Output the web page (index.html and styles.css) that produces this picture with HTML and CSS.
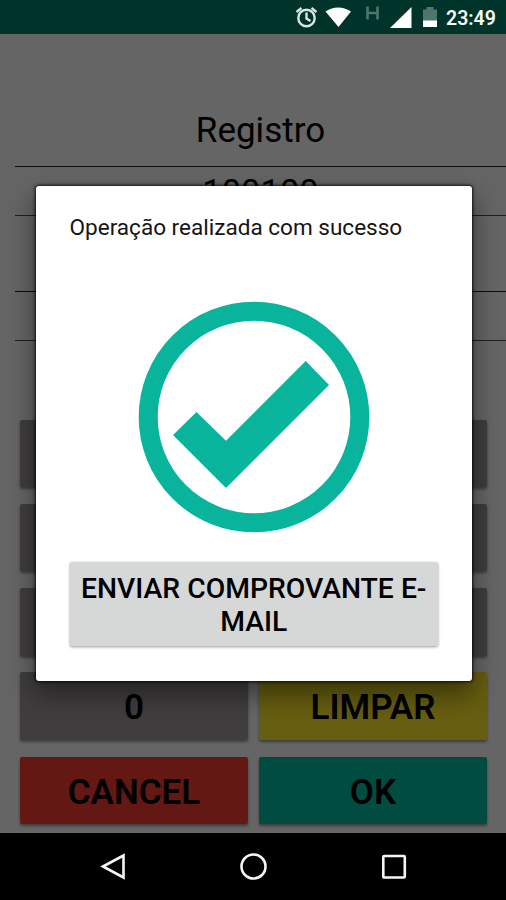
FILE: index.html
```html
<!DOCTYPE html>
<html lang="pt-BR">
<head>
<meta charset="utf-8">
<title>Registro</title>
<link rel="stylesheet" href="styles.css">
</head>
<body>
<div class="phone">
  <header class="status">
    <svg class="status-icons" width="145" height="34" viewBox="0 0 145 34">
      <g fill="none" stroke="#d9e6e2" stroke-width="2.400">
        <circle cx="12.500" cy="18" r="8.200"/>
        <path d="M12.500 12.500v6l4 2.500M2.500 12l5-4M22.500 12l-5-4"/>
      </g>
      <path d="M31.500 11.500Q44 3.500 57 11.500L44.500 27Z" fill="#fff"/>
      <path d="M73.500 6.500v13M83.500 6.500v13M73.500 13h10" fill="none" stroke="#4d766d" stroke-width="2.600"/>
      <path d="M96 28L117.500 7v21Z" fill="#fff"/>
      <path d="M129 21V9.500h3.500V7h7v2.500h3.500V21Z" fill="#4d766d"/>
      <path d="M129 20.500h14V27h-14Z" fill="#fff"/>
    </svg>
    <span class="clock">23:49</span>
  </header>
  <main class="screen">
    <h1 class="label">Registro</h1>
    <div class="field">100100</div>
    <div class="spacer"></div>
    <div class="field"></div>
    <div class="keypad">
      <button class="key"></button><button class="key"></button>
      <button class="key"></button><button class="key"></button>
      <button class="key"></button><button class="key"></button>
      <button class="key">0</button><button class="key clear">LIMPAR</button>
      <button class="key cancel">CANCEL</button><button class="key ok">OK</button>
    </div>
  </main>
  <nav class="nav">
    <svg width="28" height="28" viewBox="0 0 28 28"><path d="M4 14.500L24.500 3.500v22Z"/></svg>
    <svg width="28" height="28" viewBox="0 0 28 28"><circle cx="13.500" cy="14.500" r="12"/></svg>
    <svg width="28" height="28" viewBox="0 0 28 28"><rect x="3.300" y="4" width="21.500" height="21.500" rx="1"/></svg>
  </nav>
  <section class="dialog" role="dialog">
    <p class="message">Operação realizada com sucesso</p>
    <svg class="check" width="232" height="232" viewBox="0 0 232 232">
      <circle cx="116" cy="116" r="105.800" fill="none" stroke="#09b49d" stroke-width="19"/>
      <path d="M35 134L58.500 111L88 139.700L167.700 60L191 84L88 187Z" fill="#09b49d"/>
    </svg>
    <button class="send">ENVIAR COMPROVANTE E-<br>MAIL</button>
  </section>
</div>
</body>
</html>
```
FILE: styles.css
```css
* { box-sizing: border-box; }
body { margin: 0; font-family: Roboto, sans-serif; color: #000; background: #000; }
button { border: 0; padding: 0; font-family: inherit; color: inherit; }
.phone { position: relative; width: 506px; height: 900px; overflow: hidden; display: flex; flex-direction: column; }
.status { height: 34px; flex: none; background: #00332a; display: flex; justify-content: flex-end; gap: 7px; padding-right: 11px; }
.status-icons { flex: none; }
.clock { color: #f4f8f7; font-size: 19.5px; font-weight: 600; line-height: 37px; width: 49px; white-space: nowrap; }
.screen { height: 799px; flex: none; background: #656565; padding: 74px 0 0 15px; display: flex; flex-direction: column; }
.label { margin: 0; height: 59px; flex: none; font-size: 35px; font-weight: 400; line-height: 46px; text-align: center; border-bottom: 1px solid #0c0c0c; }
.field { height: 49px; flex: none; border-bottom: 1px solid #202020; font-size: 34.5px; line-height: 50px; text-align: center; }
.spacer { height: 76px; flex: none; border-bottom: 1px solid #0c0c0c; }
.keypad { margin: 78.5px 19px 0 5px; display: grid; grid-template-columns: 228px 228px; grid-auto-rows: 67.5px; gap: 16.8px 11px; }
.key { background: #403d3e; border-radius: 2px; font-size: 35px; font-weight: 600; line-height: 67px; padding-top: 2px; box-shadow: 0 2px 3px rgba(0,0,0,.4); }
.clear { background: #665e10; }
.cancel { background: #631813; }
.ok { background: #004c40; }
.nav { height: 67px; flex: none; background: #000; display: flex; justify-content: space-between; padding: 19px 98px 0 99px; }
.nav svg { fill: none; stroke: #f5f5f5; stroke-width: 2.6; }
.dialog { position: absolute; left: 35.5px; top: 185.5px; width: 436px; height: 495.5px; padding: 28.5px 34px 35px; background: #fff; border-radius: 3px; box-shadow: 0 0 3px 1px rgba(0,0,0,.8), 0 12px 26px 2px rgba(0,0,0,.42); display: flex; flex-direction: column; }
.message { margin: 0; font-size: 22.55px; line-height: 28px; color: #151515; white-space: nowrap; }
.check { margin: 59px 0 0 68.4px; flex: none; }
.send { margin-top: 28.7px; width: 368.5px; height: 84px; flex: none; background: #d6d8d7; border-radius: 2px; box-shadow: 0 1px 3px rgba(0,0,0,.4); font-size: 28.3px; font-weight: 500; line-height: 33px; white-space: nowrap; padding-top: 2px; }
```
